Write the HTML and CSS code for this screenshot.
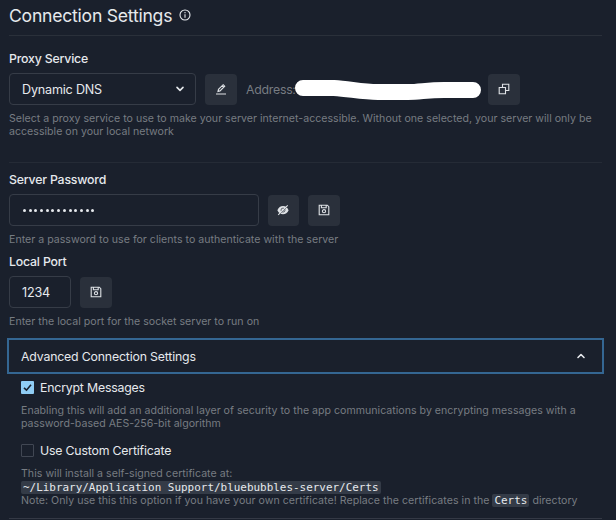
FILE: index.html
```html
<!DOCTYPE html>
<html lang="en">
<head>
<meta charset="utf-8">
<title>Connection Settings</title>
<link rel="stylesheet" href="styles.css">
</head>
<body>
<main class="page">
  <header class="heading">
    <h1>Connection Settings</h1>
    <svg class="info" viewBox="0 0 12 12"><circle cx="6" cy="6" r="5"/><path d="M6 5.2V8.8M6 3v1.2"/></svg>
  </header>

  <section class="proxy">
    <h2>Proxy Service</h2>
    <div class="row">
      <div class="field select"><span>Dynamic DNS</span>
        <svg class="chevron" viewBox="0 0 10 8"><path d="M2 2.4 5 5.4 8 2.4"/></svg>
      </div>
      <button class="btn" aria-label="Edit"><svg viewBox="0 0 12 12"><path d="M1 11h10M3 8.4l.5-2 4.7-4.7 1.5 1.5L5 7.9zM7.1 2.8l1.5 1.5"/></svg></button>
      <div class="address"><span>Address:</span>
        <svg class="redaction" viewBox="0 0 188 26"><path d="M9 12H40C56 13 68 16 84 16H114C126 16 133 14 150 14H179"/></svg>
      </div>
      <button class="btn copy" aria-label="Copy"><svg viewBox="0 0 12 12"><path d="M4.500 4.300V1.200h6.300v6.300H7.800M1.200 4.500h6.300v6.300H1.200z"/></svg></button>
    </div>
    <p class="help">Select a proxy service to use to make your server internet-accessible. Without one selected, your server will only be<br>accessible on your local network</p>
  </section>

  <section class="password">
    <h2>Server Password</h2>
    <div class="row">
      <div class="field secret"><i></i><i></i><i></i><i></i><i></i><i></i><i></i><i></i><i></i><i></i><i></i><i></i><i></i></div>
      <button class="btn" aria-label="Show password"><svg viewBox="0 0 12 12"><path class="solid" d="M.4 6.200C1.500 3.300 3.500 1.900 6 1.900s4.500 1.400 5.600 4.300C10.500 9 8.500 10.300 6 10.300S1.500 9 .4 6.200z"/><circle class="cut" cx="6" cy="6.100" r="2"/><path class="slash-gap" d="M2.300 10.700 11 2"/><path d="M1.200 10.800 10.700 1.300"/></svg></button>
      <button class="btn" aria-label="Save"><svg viewBox="0 0 12 12"><path d="M1.200 1.200h8.100l1.500 1.500v8.100H1.200zM3.400 1.500v2.300h4.800V1.500"/><circle cx="6" cy="7.200" r="1.600"/></svg></button>
    </div>
    <p class="help">Enter a password to use for clients to authenticate with the server</p>
  </section>

  <section class="port">
    <h2>Local Port</h2>
    <div class="row">
      <div class="field number">1234</div>
      <button class="btn" aria-label="Save"><svg viewBox="0 0 12 12"><path d="M1.200 1.200h8.100l1.500 1.500v8.100H1.200zM3.400 1.500v2.300h4.800V1.500"/><circle cx="6" cy="7.200" r="1.600"/></svg></button>
    </div>
    <p class="help">Enter the local port for the socket server to run on</p>
  </section>

  <div class="accordion"><span>Advanced Connection Settings</span>
    <svg class="chevron" viewBox="0 0 10 8"><path d="M2 5.500 5 2.500 8 5.500"/></svg>
  </div>
  <section class="panel">
    <div class="check"><span class="box checked"><svg viewBox="0 0 13 13"><path d="M3 6.900 5.500 9.200 10 3.700"/></svg></span><span>Encrypt Messages</span></div>
    <p class="help encrypt-help">Enabling this will add an additional layer of security to the app communications by encrypting messages with a<br>password-based AES-256-bit algorithm</p>
    <div class="check"><span class="box"></span><span>Use Custom Certificate</span></div>
    <p class="help cert-help">This will install a self-signed certificate at:<br><code>~/Library/Application Support/bluebubbles-server/Certs</code><br>Note: Only use this this option if you have your own certificate! Replace the certificates in the <code>Certs</code> directory</p>
  </section>
</main>
</body>
</html>
```
FILE: styles.css
```css
* { box-sizing: border-box; }
body {
  margin: 0;
  background: #1a202c;
  color: #e6e9ed;
  font-family: Inter, "Liberation Sans", sans-serif;
}
h1, h2, p { margin: 0; font-weight: 400; }
svg { display: block; fill: none; stroke: currentColor; flex: none; }
.page { width: 616px; height: 520px; overflow: hidden; padding: 0 14px 0 9px; }
.heading {
  display: flex; align-items: center; gap: 7px;
  height: 36px; padding-bottom: 4px; border-bottom: 1px solid #2a303a;
}
h1 { font-size: 17.6px; line-height: 24px; letter-spacing: -0.24px; }
.info { width: 12px; height: 12px; margin-top: -1px; stroke-width: 1.1; }
h2 { font-size: 12.3px; line-height: 16px; font-weight: 500; letter-spacing: -0.18px; margin-bottom: 6px; }
.row { display: flex; align-items: center; height: 32px; }
.field {
  display: flex; align-items: center; height: 32px; padding: 0 12px;
  border: 1px solid #363c47; border-radius: 4px; font-size: 12.6px; letter-spacing: -0.2px;
}
.btn {
  display: flex; align-items: center; justify-content: center;
  width: 31.500px; height: 31px; margin: 0 0 0 9px; padding: 0;
  border: 0; border-radius: 4px; background: #2a303b; color: #dfe2e6;
}
.btn svg { width: 12px; height: 12px; stroke-width: 1.1; }
.solid { fill: currentColor; stroke: none; }
.cut { stroke: #2a303b; stroke-width: .7; }
.btn .slash-gap { stroke: #2a303b; stroke-width: .7; }
.chevron { width: 10px; height: 8px; stroke-width: 1.6; stroke-linecap: round; stroke-linejoin: round; }
.help { font-size: 10.6px; line-height: 13.2px; letter-spacing: .012px; color: #777c82; white-space: nowrap; }
.row + .help { margin-top: 7px; }
.proxy { height: 127px; padding-top: 15px; border-bottom: 1px solid #252b36; }
.select { width: 187px; justify-content: space-between; padding-right: 10px; }
.address { display: flex; align-items: center; width: 245px; margin-left: 9.500px; font-size: 12.3px; letter-spacing: -0.25px; color: #777c82; }
.address span { width: 47.500px; }
.redaction { width: 188px; height: 26px; stroke: #fff; stroke-width: 16; stroke-linecap: round; }
.copy { margin-left: -3px; }
.password { height: 90px; padding-top: 9px; }
.secret { width: 249.500px; gap: 2.700px; padding-left: 13px; padding-top: 1px; }
.secret i { width: 3px; height: 3px; border-radius: 50%; background: #e6e9ed; }
.port { height: 85px; padding-top: 1px; }
.number { width: 62px; }
.accordion {
  display: flex; align-items: center; justify-content: space-between;
  height: 36px; margin: 0 -2px; padding: 0 16px 0 12px;
  border: 2px solid #346692; font-size: 12.3px; letter-spacing: -0.17px;
}
.panel { height: 145px; padding: 5px 0 0 12px; border-bottom: 1px solid #343945; }
.check { display: flex; align-items: center; gap: 6px; height: 17px; font-size: 12.3px; letter-spacing: -0.18px; }
.box { width: 13px; height: 13px; border: 1px solid #414753; border-radius: 1px; }
.checked { border: 0; background: #90cdf4; color: #1a202c; }
.checked svg { stroke-width: 1.600; }
.encrypt-help { margin: 8px 0 12px; }
.cert-help { margin-top: 8px; letter-spacing: .03px; }
code {
  font: 10.940px/12px "DejaVu Sans Mono", monospace; letter-spacing: 0;
  padding: 0 2px; border-radius: 2px; background: #343b47; color: #e6e9ed;
}
```
